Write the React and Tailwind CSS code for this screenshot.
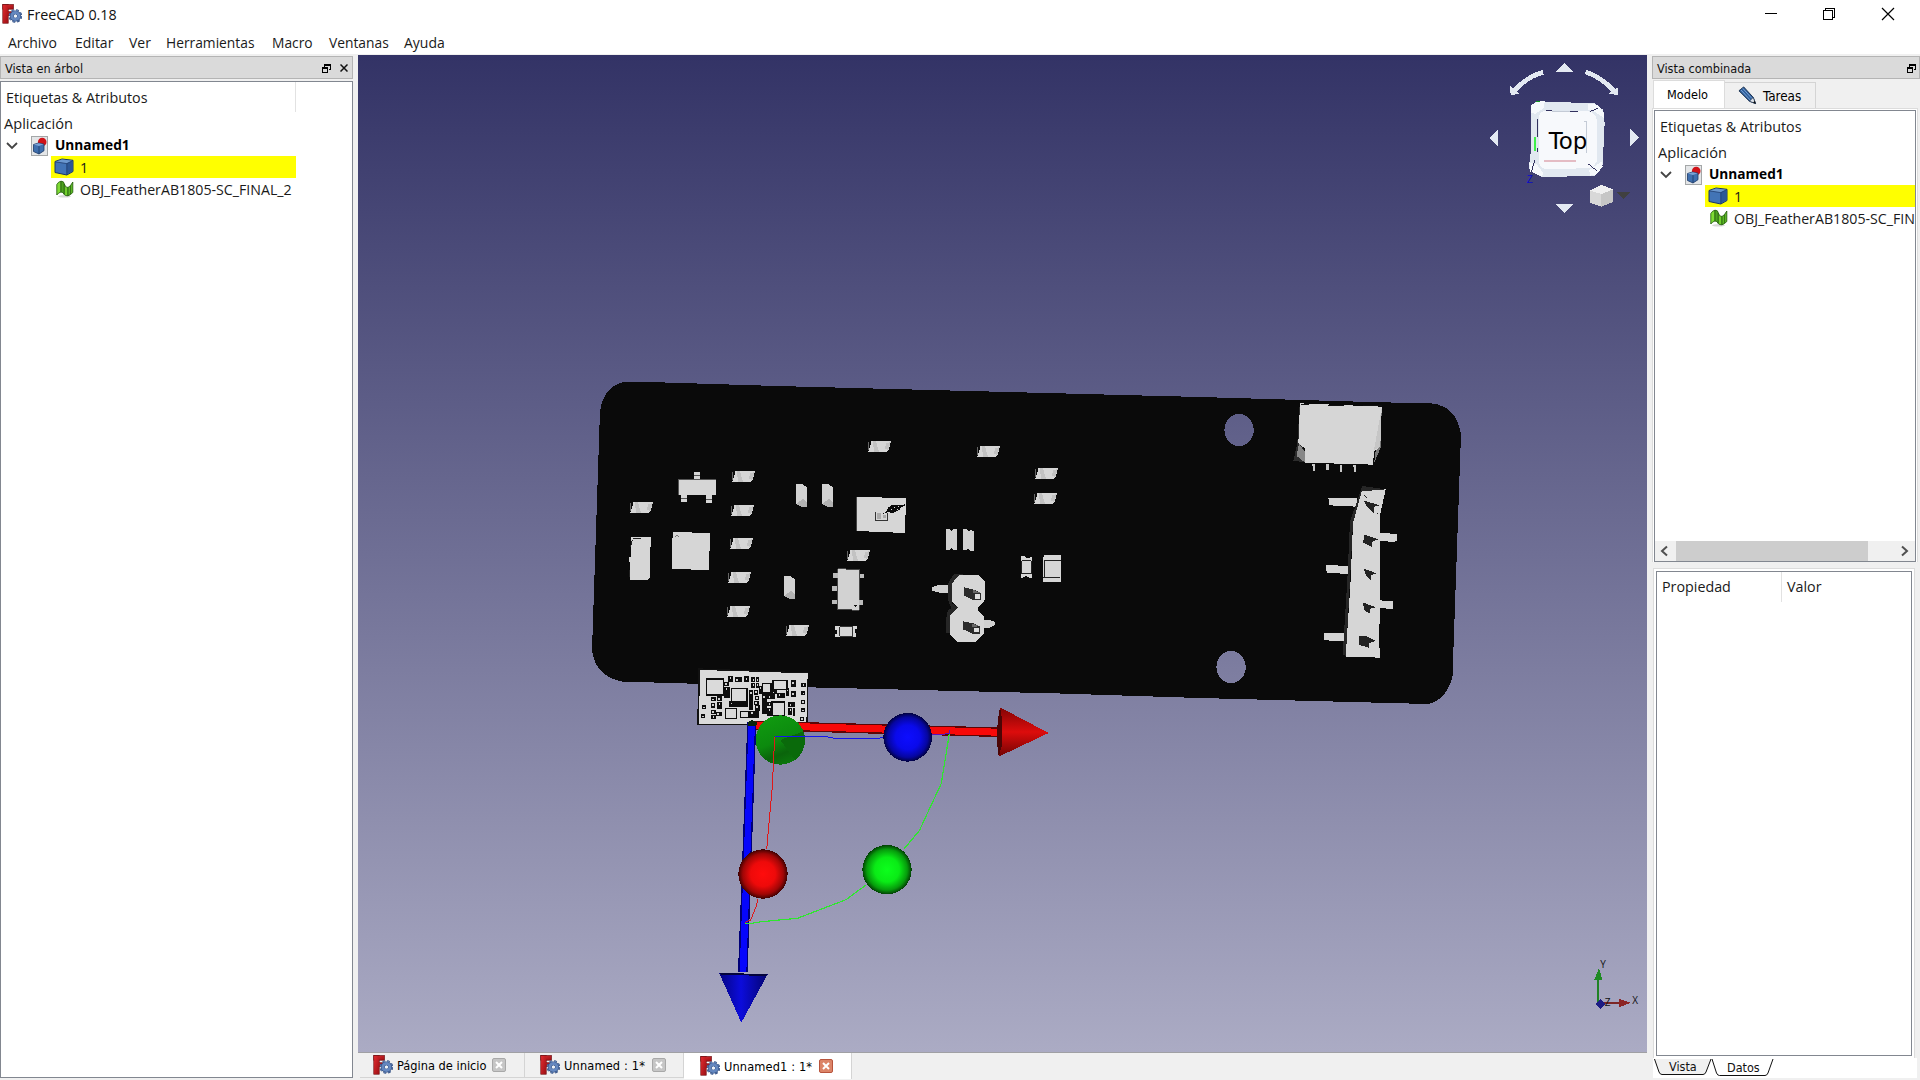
import React from "react";

const UI = "font-['Open_Sans','Noto_Sans',sans-serif]";
const TAHOMA = "font-['DejaVu_Sans_Condensed','DejaVu_Sans',sans-serif]";

function FreeCadLogo({ className }) {
  return (
    <svg viewBox="0 0 20 20" className={className}>
      <defs>
        <linearGradient id="logoRed" x1="0" y1="0" x2="1" y2="1">
          <stop offset="0" stopColor="#e02a2e" />
          <stop offset="1" stopColor="#9c1015" />
        </linearGradient>
      </defs>
      <rect x="0.8" y="0.6" width="5.4" height="18.6" fill="url(#logoRed)" stroke="#6e0d10" strokeWidth="0.7" />
      <rect x="0.8" y="0.6" width="10.6" height="4.6" fill="url(#logoRed)" stroke="#6e0d10" strokeWidth="0.7" />
      <rect x="5" y="7.6" width="4.4" height="4" fill="#b3171b" stroke="#6e0d10" strokeWidth="0.5" />
      <rect x="1.3" y="1.1" width="4.6" height="17.6" fill="url(#logoRed)" />
      <circle cx="13.4" cy="12" r="5.5" fill="none" stroke="#2c4677" strokeWidth="2.6" strokeDasharray="2.5 1.82" />
      <circle cx="13.4" cy="12" r="5.4" fill="none" stroke="#6688bd" strokeWidth="1.8" strokeDasharray="2.3 1.94" />
      <circle cx="13.4" cy="12" r="3.6" fill="none" stroke="#2c4677" strokeWidth="4" />
      <circle cx="13.4" cy="12" r="3.6" fill="none" stroke="#6487bf" strokeWidth="3" />
      <circle cx="13.4" cy="12" r="1.6" fill="#eef2f8" />
    </svg>
  );
}

function DocIcon() {
  return (
    <svg viewBox="0 0 17 20" className="h-5 w-[17px] shrink-0">
      <rect x="0.5" y="0.5" width="16" height="19" fill="#e4e6e8" stroke="#a4a7a8" />
      <circle cx="11.200" cy="6" r="4.300" fill="#d01218" />
      <path d="M2.500 8.500l5-1.500 5.500 1.200v6.500L8 18 2.500 15.500z" fill="#3f6fae" stroke="#1b3765" strokeWidth="0.800" />
      <path d="M2.800 8.600l5 1.500 5-1.800-5-1z" fill="#7ba2d4" />
      <path d="M8 10.200V18" stroke="#1b3765" strokeWidth="0.800" />
    </svg>
  );
}

function CubeIcon() {
  return (
    <svg viewBox="0 0 20 18" className="h-[18px] w-5 shrink-0">
      <path d="M1 3.500L8 1l11 1.300v11.200L12.800 17 1 14.500z" fill="#4274b6" stroke="#1b3765" strokeWidth="1" strokeLinejoin="round" />
      <path d="M1.600 3.800l11 1.600L18.400 2.800 8 1.600z" fill="#6a98d0" />
      <path d="M12.800 5.500L18.400 3v10.200L12.800 16.300z" fill="#2d5896" />
      <path d="M1.500 3.900l11.300 1.700V17M12.800 5.600L18.700 2.600" fill="none" stroke="#1b3765" strokeWidth="0.700" />
    </svg>
  );
}

/* Folded green sheet: two light faces and two darker ones */
function MeshIcon() {
  return (
    <svg viewBox="0 0 18 18" className="-mt-[3px] h-[18px] w-[18px] shrink-0">
      <ellipse cx="8.500" cy="16.300" rx="6.500" ry="1.300" fill="#d8d8d8" />
      <path d="M.8 4.500Q2.500 1.500 5 1.200V12Q2.500 12.500.8 15z" fill="#7fdc35" stroke="#2b6612" strokeWidth="0.900" strokeLinejoin="round" />
      <path d="M5 1.200Q8 1 8.300 4V14.500Q7 12 5 12z" fill="#4ea21f" stroke="#2b6612" strokeWidth="0.900" strokeLinejoin="round" />
      <path d="M8.300 4Q9.500 8 12 7.500V15.800Q9.500 16 8.300 14.500z" fill="#72d02d" stroke="#2b6612" strokeWidth="0.900" strokeLinejoin="round" />
      <path d="M12 7.500Q14.500 6.500 16.800 2V12.500Q14.500 15 12 15.800z" fill="#5cb824" stroke="#2b6612" strokeWidth="0.900" strokeLinejoin="round" />
      <path d="M14.500 5.500v9" stroke="#2b6612" strokeWidth="0.800" />
    </svg>
  );
}

function PencilIcon() {
  return (
    <svg viewBox="0 0 20 20" className="h-[19px] w-[19px] shrink-0">
      <path d="M1 5L6 1l10 11 2.500 6.500L12 16z" fill="#2f5f9e" stroke="#152b4a" strokeWidth="1" strokeLinejoin="round" />
      <path d="M3 4l10 11M5 2.500l10 11" stroke="#86abd8" strokeWidth="0.900" />
      <path d="M12 16l4-4 2.500 6.500z" fill="#dfe3e8" stroke="#152b4a" strokeWidth="0.700" />
      <path d="M15.800 17.500l1.800-2 1 3z" fill="#111" />
    </svg>
  );
}

function FloatIcon() {
  return (
    <svg viewBox="0 0 9 9" className="h-[9px] w-[9px] shrink-0" shapeRendering="crispEdges" fill="none" stroke="#000">
      <path d="M2.500 3V.5h6v5H6.500M2.500 1.500h6M.5 3.500h5v5h-5zM.5 4.500h5" />
    </svg>
  );
}

function DockHeader({ title, closable, className }) {
  return (
    <div className={`flex h-[23px] items-center border border-[#b4b4b4] bg-[#dadada] pt-px pl-1 text-[12.6px] text-[#111] ${TAHOMA} ${className}`}>
      <span className="flex-1 pt-[2px]">{title}</span>
      <FloatIcon />
      {closable && (
        <svg viewBox="0 0 8 8" className="ml-[9px] h-2 w-2" stroke="#111" strokeWidth="1.500">
          <path d="M.5.5l7 7M7.500.5l-7 7" />
        </svg>
      )}
    </div>
  );
}

function Tree({ className, headerRule, rowWidth, meshLabel }) {
  return (
    <div className={`overflow-hidden whitespace-nowrap text-[14.2px] text-[#1a1a1a] ${className}`}>
      <div className="flex h-[30px] items-center">
        <div className={`flex h-full items-center pt-[2px] pl-[5px] text-[14.3px] ${headerRule}`}>Etiquetas &amp; Atributos</div>
      </div>
      <div className="flex h-[23px] items-center pl-[3px] text-[14.6px]">Aplicación</div>
      <div className="flex h-[21px] items-center pl-[5px]">
        <svg viewBox="0 0 12 8" className="mr-[13px] h-2 w-3" fill="none" stroke="#444" strokeWidth="1.800">
          <path d="M1 1l5 5 5-5" />
        </svg>
        <DocIcon />
        <span className="ml-[7px] text-[13.7px] font-bold text-black">Unnamed1</span>
      </div>
      <div className={`ml-[50px] flex h-[22px] items-center bg-[#ffff00] pl-[3px] ${rowWidth}`}>
        <CubeIcon />
        <span className="ml-[6px] pt-px">1</span>
      </div>
      <div className="ml-[50px] flex h-[24px] items-center pl-[5px]">
        <MeshIcon />
        <span className="ml-[6px]">{meshLabel}</span>
      </div>
    </div>
  );
}

/* Small surface-mount parts, top-left corners in screen units */
const flatParts = [
  [868, 441], [977, 446], [1035, 468], [1034, 493], [732, 471], [731, 505], [730, 538],
  [728, 572], [727, 606], [630, 502], [847, 550], [786, 625],
];
const uprightParts = [[796, 484], [822, 484], [784, 576]];

/* Module footprint rectangles: x, y, width, height */
const openPads = [
  [50, 42, 50, 48], [125, 71, 46, 40], [218, 56, 25, 28], [249, 46, 42, 27], [246, 111, 38, 40],
  [107, 130, 32, 30], [151, 140, 26, 17],
];
const darkPads = [
  [115, 32, 13, 18], [135, 37, 20, 14], [163, 34, 13, 18], [184, 37, 10, 14], [197, 37, 10, 14], [184, 54, 11, 14],
  [197, 54, 11, 14], [102, 50, 15, 12], [103, 66, 16, 32], [62, 97, 15, 11], [80, 94, 15, 13], [63, 113, 13, 15],
  [63, 135, 15, 11], [64, 150, 13, 11], [82, 110, 14, 22], [78, 141, 18, 12], [35, 121, 12, 11], [33, 148, 12, 11],
  [118, 108, 56, 18], [176, 76, 14, 60], [192, 75, 13, 14], [206, 62, 11, 24], [194, 92, 14, 14], [195, 120, 14, 18],
  [180, 138, 28, 20], [192, 108, 14, 11], [216, 88, 14, 60], [232, 88, 24, 14], [262, 84, 22, 14], [244, 76, 16, 10],
  [288, 68, 8, 24], [303, 46, 14, 19], [303, 79, 14, 17], [334, 54, 14, 11], [334, 79, 12, 12], [333, 105, 12, 12],
  [333, 130, 12, 12], [330, 155, 12, 12], [295, 112, 20, 14], [295, 128, 10, 22], [308, 130, 8, 22], [232, 110, 12, 12],
  [232, 128, 10, 26],
];

function PinArrow({ d }) {
  return <path d={d} fill="#222" />;
}

function Scene() {
  return (
    <svg viewBox="358 55 1289 997" className="block h-[997px] w-[1289px]">
      <defs>
        <linearGradient id="sky" gradientUnits="userSpaceOnUse" x1="0" y1="55" x2="0" y2="1052">
          <stop offset="0" stopColor="#333366" />
          <stop offset="1" stopColor="#ababc4" />
        </linearGradient>
        <radialGradient id="ballBlue" cx="0.5" cy="0.5" r="0.5">
          <stop offset="0" stopColor="#0d0dff" /><stop offset="0.5" stopColor="#0a0aeb" /><stop offset="0.82" stopColor="#0606a0" /><stop offset="1" stopColor="#020240" />
        </radialGradient>
        <radialGradient id="ballRed" cx="0.5" cy="0.5" r="0.5">
          <stop offset="0" stopColor="#ff0c0c" /><stop offset="0.5" stopColor="#ee0a0a" /><stop offset="0.82" stopColor="#a00606" /><stop offset="1" stopColor="#400202" />
        </radialGradient>
        <radialGradient id="ballGreen" cx="0.5" cy="0.5" r="0.5">
          <stop offset="0" stopColor="#0cff1c" /><stop offset="0.5" stopColor="#0aeb16" /><stop offset="0.82" stopColor="#069c0c" /><stop offset="1" stopColor="#024004" />
        </radialGradient>
        <linearGradient id="coneRed" x1="0" y1="0" x2="0" y2="1">
          <stop offset="0" stopColor="#800505" /><stop offset="0.5" stopColor="#dd0c0c" /><stop offset="1" stopColor="#700404" />
        </linearGradient>
        <linearGradient id="coneBlue" x1="0" y1="0" x2="1" y2="0">
          <stop offset="0" stopColor="#040480" /><stop offset="0.45" stopColor="#0c0cdc" /><stop offset="1" stopColor="#040470" />
        </linearGradient>
        <linearGradient id="coneGreen" x1="0.3" y1="0" x2="0.7" y2="1">
          <stop offset="0" stopColor="#109a10" /><stop offset="0.5" stopColor="#0c8a0e" /><stop offset="0.75" stopColor="#0a640b" /><stop offset="1" stopColor="#0c7a0d" />
        </linearGradient>
      </defs>
      <rect x="358" y="55" width="1289" height="997" fill="url(#sky)" />

      <g shapeRendering="crispEdges">
        <path
          fillRule="evenodd"
          fill="#0a0a0a"
          d="M624 382L665 382.500 777 386 1200 397 1370 402 1432 403.500Q1456 406 1461 434L1452.500 676Q1447 700 1428 704L1200 698 1060 693.500 816 687.500 622 681.500Q595 676 592 650L600 411Q604 386 624 382ZM1224.500 431a14.600 16 0 1 0 29.200-2a14.600 16 0 1 0-29.200 2ZM1216.500 668a14.600 16 0 1 0 29.200-2a14.600 16 0 1 0-29.200 2Z"
        />

        {flatParts.map(([x, y]) => (
          <g key={`${x}-${y}`} transform={`translate(${x} ${y})`}>
            <path d="M3 0H23L21 8L19 11H0L3 3Z" fill="#d6d6d6" />
            <path d="M5 0L8 0 11 11H6ZM18 2L23 1 20 9 17 8Z" fill="#c2c2c2" />
            <path d="M0 1h1v8H0z" fill="#666" />
          </g>
        ))}
        {uprightParts.map(([x, y]) => (
          <g key={`${x}-${y}`} transform={`translate(${x} ${y})`}>
            <path d="M0 0H6L11 3V23H6L0 20Z" fill="#d2d2d2" />
            <path d="M0 20L7 15 11 18V23H6Z" fill="#b2b2b2" />
          </g>
        ))}

        <g transform="translate(580 370) scale(0.33333)">
          <path d="M297 328H408V376H396V398H378V376H321V395H303V376H297ZM342 307h18v20h-18z" fill="#d6d6d6" />
          <path d="M297 328V376M297 328H408M342 317h18M303 386h18M378 388h18" stroke="#555" strokeWidth="3" fill="none" />
          <path d="M153 501H212V530H209V622L205 629H150V575H147V560H152Z" fill="#d6d6d6" />
          <path d="M158 505h25M152 530l5-20M150 600v22" stroke="#222" strokeWidth="3" />
          <path d="M278 486L390 489 387 600 275 597Z" fill="#d6d6d6" />
          <path d="M285 499q6-6 12 0" stroke="#777" strokeWidth="3" fill="none" />
        </g>

        <g transform="translate(830 420) scale(0.33333)">
          <path d="M82 230L228 235 225 339 80 333Z" fill="#d6d6d6" />
          <path d="M80 232V333" stroke="#444" strokeWidth="3" />
          <path d="M136 275V301H173V280" fill="none" stroke="#333" strokeWidth="3" />
          <path d="M141 280h12v17h-12zM158 285h10v10h-10z" fill="#aaa" />
          <path d="M157 283L170 273 174 262 187 255 215 256 224 253V257L213 262 208 270 190 278 172 277Z" fill="#0a0a0a" />
          <path d="M192 262h3M200 268h3M205 260h3M182 270h3" stroke="#ddd" strokeWidth="3" />

          <path d="M24 446L90 449 87 571 21 568Z" fill="#d2d2d2" stroke="#444" strokeWidth="3" />
          <path d="M9 459h14v14H9zM7 498h14v16H7zM6 540h14v13H6zM90 462h12v13H90zM86 541h13v15H86z" fill="#bbb" />
          <path d="M72 556h9l-4 5z" fill="#111" />
          <path d="M15 618H81V628H76V640H78V651H15V642H20V630H15Z" fill="#d6d6d6" />
          <path d="M29 621H68V649H29Z" fill="#d6d6d6" stroke="#333" strokeWidth="3" />

          <path d="M348 327H358L364 333 372 327H381V389H370L364 384 357 390H348ZM399 327H411L416 333 422 331 432 332V392H422L415 386 408 390H399Z" fill="#d0d0d0" />
          <path d="M573 408H584L588 413H600L605 410V474H598L588 468 578 473H573Z" fill="#d6d6d6" />
          <path d="M575 422H604V461H575Z" fill="#d6d6d6" stroke="#222" strokeWidth="3" />
          <path d="M642 405H692V486H639V420Z" fill="#d6d6d6" />
          <path d="M641 422H692M640 473H691M644 424V472" stroke="#222" strokeWidth="3" />

          <path d="M354 495H325L307 501V512L328 518H354ZM460 600H480L494 605V616L478 623H460Z" fill="#d0d0d0" />
          <path d="M371 463H398L366 500V550L384 562 361 590V640L349 640V595L353 572 364 565 354 540V490Z" fill="#262626" />
          <path d="M388 465H447L465 484V540L444 562V572L462 590V640L436 666H382L360 642V588L384 562 366 545V490Z" fill="#d6d6d6" />
          <path d="M402 502L434 510 453 520V540H430L402 527ZM399 604L430 610 450 620V641H428L399 628Z" fill="#2b2b2b" />
          <path d="M430 510L453 519 428 520ZM426 610L449 618 426 622Z" fill="#666" />
          <path d="M435 522h15v15h-15zM432 624h14v12h-14z" fill="#dedede" />
        </g>

        <g transform="translate(1200 380) scale(0.33333)">
          <path d="M299 74L314 247 280 242 292 190Z" fill="#2c2c2c" />
          <path d="M297 190L314 215V247L290 228Z" fill="#888" />
          <path d="M545 82L543 200 522 250Z" fill="#777" />
          <path d="M300 70L545 80 540 200 522 215 519 254 315 248V206L295 190Z" fill="#d6d6d6" />
          <path d="M545 85L541 200 522 210Z" fill="#c6c6c6" />
          <path d="M302 73h25M384 76h48M490 78h55" stroke="#111" strokeWidth="3" />
          <path d="M337 252h8v20h-6zM378 253h9v18h-8zM420 254h6v22h-6zM460 255h8v20h-6z" fill="#c8c8c8" />

          <path d="M385 353L470 355V380L388 376ZM378 556L445 557V582L380 578ZM371 759L435 760V783L372 781Z" fill="#d4d4d4" />
          <path d="M538 458L590 462V482L580 486 538 482ZM535 661L580 663V686L535 685Z" fill="#d4d4d4" />
          <path d="M487 318L557 328 485 334 459 430 438 828 428 824 442 600 450 425Z" fill="#262626" />
          <path d="M485 334L557 328 540 405V700L537 770 540 833 437 830 452 600 459 430Z" fill="#d6d6d6" />
          <PinArrow d="M492 362L540 376 522 380V400L500 378Z" />
          <PinArrow d="M493 464L534 478 518 485 515 500 489 488Z" />
          <PinArrow d="M491 566L530 580 514 585 512 600 498 588Z" />
          <PinArrow d="M489 667L527 682 512 686 508 702 492 688Z" />
          <PinArrow d="M477 768L495 767 528 783 508 789 507 803 477 795Z" />
          <path d="M492 345l8 8M530 400h5" stroke="#222" strokeWidth="3" />
        </g>

        <g transform="translate(690 665) scale(0.33333)">
          <path d="M24 10L354 22V180L22 180Z" fill="#111" />
          <path d="M31 15L353 25 349 178 26 176Z" fill="#dadada" />
          {darkPads.map(([x, y, w, h]) => (
            <g key={`${x}-${y}`}>
              <rect x={x} y={y} width={w} height={h} fill="#0c0c0c" />
              <rect x={x + 4} y={y + 4} width={Math.min(5, w - 7)} height={Math.min(6, h - 7)} fill="#d0d0d0" />
            </g>
          ))}
          {openPads.map(([x, y, w, h]) => (
            <rect key={`${x}-${y}`} x={x} y={y} width={w} height={h} fill="#dadada" stroke="#0c0c0c" strokeWidth="4" />
          ))}
        </g>
      </g>

      <g transform="translate(680 660) scale(0.33333)" shapeRendering="crispEdges">
        <path d="M215 182L950 202V231L215 211Z" fill="#5c0606" />
        <path d="M225 186L950 206V227L225 207Z" fill="#f80808" />
        <path d="M960 142L1106 219 956 290Z" fill="url(#coneRed)" />
        <path d="M960 142Q944 215 956 290L965 260V170Z" fill="#4c0505" />
        <path d="M202 185H229L203 937H174Z" fill="#000078" />
        <path d="M206 185H225L199 937H179Z" fill="#0606fc" />
        <path d="M205 186L217 180 232 188 228 198H203Z" fill="#0a250a" />
        <path d="M117 938L263 943 184 1088Z" fill="url(#coneBlue)" />
        <path d="M117 938L263 943 255 948 125 944Z" fill="#04043c" />
        <circle cx="301" cy="240" r="74" fill="url(#coneGreen)" />
        <path d="M301 240L370 214A74 74 0 0 1 345 300Z" fill="#0a6a0b" />
        <path d="M286 230H438L470 236H590L612 232" fill="none" stroke="#1414f0" strokeWidth="3" />
        <path d="M755 225L808 221V211" fill="none" stroke="#5a10c0" strokeWidth="3" />
        <path d="M284 230L277 380 260 568M233 716L230 735 212 780 196 787" fill="none" stroke="#e01818" strokeWidth="3" />
        <path d="M808 221L784 370 718 512 672 567M558 675L498 719 352 775 245 785 215 790H196" fill="none" stroke="#2fe62f" strokeWidth="3.600" />
        <circle cx="683" cy="232" r="73" fill="url(#ballBlue)" />
        <circle cx="249" cy="642" r="74" fill="url(#ballRed)" />
        <circle cx="621" cy="629" r="74" fill="url(#ballGreen)" />
      </g>

      <g transform="translate(1460 40) scale(0.33333)" shapeRendering="crispEdges">
        <path d="M313 69L340 97H287ZM313 519L288 492H340ZM89 294L114 269V319ZM537 294L510 267V321Z" fill="#e3e9f2" />
        <path d="M249 97Q205 108 165 150M377 96Q425 112 462 152" fill="none" stroke="#e3e9f2" strokeWidth="14" />
        <path d="M150 136L152 165 178 162ZM474 142L474 165 445 161Z" fill="#e3e9f2" />
        <path d="M230 184L405 190 430 210 434 250 428 375 405 408 245 411 208 388V370L212 340 214 200Z" fill="#e1e8f0" />
        <path d="M214 195L235 184H255L250 205 225 222 214 218ZM385 192L412 194 430 215 432 235 405 215 385 210ZM208 368L230 372 250 400 245 409 210 394ZM425 365L428 380 408 405 390 407 388 390Z" fill="#f6f9fc" />
        <path d="M255 212H380Q408 218 410 240V365Q400 385 380 385L255 387Q236 380 236 360V230Q240 216 255 212Z" fill="#f7f9fc" />
        <path d="M258 212h18M330 216h24M232 238V290M232 325V335M390 214L415 205M385 372L412 393M224 360L215 395" stroke="#32325f" strokeWidth="3" fill="none" />
        <path d="M276 214H330M372 245H380V340" stroke="#c4cbd6" strokeWidth="4" fill="none" />
        <path d="M226 290V333" stroke="#3ff04a" strokeWidth="5" />
        <path d="M229 184h10" stroke="#109a20" strokeWidth="4" />
        <path d="M252 362H348" stroke="#e4bcc4" strokeWidth="6" />
        <text x="266" y="328" fontSize="69" textLength="116" lengthAdjust="spacingAndGlyphs" fontFamily="'DejaVu Sans', sans-serif" fill="#000">Top</text>
        <text x="200" y="428" fontSize="30" fontFamily="'Liberation Sans', sans-serif" fill="#0a0ac8">Z</text>
        <path d="M390 452L424 434 459 448V486L424 500 390 488Z" fill="#d8d8d8" />
        <path d="M390 452L424 434 459 448 424 462Z" fill="#f0f0f0" />
        <path d="M424 462L459 448V486L424 500Z" fill="#c6c6c6" />
        <path d="M471 457H512L492 477Z" fill="#404040" />
      </g>

      <g transform="translate(1560 940) scale(0.33333)" shapeRendering="crispEdges" fontFamily="'Open Sans', sans-serif" fill="#111" fontSize="30">
        <path d="M113 190V110" stroke="#1f8224" strokeWidth="6" />
        <path d="M117 84L127 119H103Z" fill="#1f8a24" />
        <path d="M125 189H180" stroke="#7c2626" strokeWidth="6" />
        <path d="M177 177L212 188 177 202Z" fill="#8c2424" />
        <path d="M121 177L136 191 121 207 107 191Z" fill="#1c1c84" />
        <text x="121" y="83">Y</text>
        <text x="134" y="198">Z</text>
        <text x="217" y="192">X</text>
      </g>
    </svg>
  );
}

function DocTab({ label, active, width, inset = "pl-[13px]", closeGap = "ml-[7px]", tracking = "" }) {
  return (
    <div className={`flex items-center border-r border-[#d4d4d4] ${inset} ${width} ${active ? "h-[26px] bg-white" : "h-[25px] border-b bg-[#f0f0f0]"}`}>
      <FreeCadLogo className="h-5 w-5 shrink-0" />
      <span className={`ml-1 pt-px whitespace-pre ${tracking}`}>{label}</span>
      <span className={`${closeGap} flex h-[14px] w-[14px] items-center justify-center rounded-[2px] border ${active ? "border-[#b8543c] bg-[#dc8468]" : "border-[#a8a8a8] bg-[#c6c6c6]"}`}>
        <svg viewBox="0 0 8 8" className="h-2 w-2" stroke="#fff" strokeWidth="2"><path d="M1 1l6 6M7 1L1 7" /></svg>
      </span>
    </div>
  );
}

export default function App() {
  return (
    <div className={`flex h-[1080px] w-[1920px] flex-col overflow-hidden bg-[#f0f0f0] text-black ${UI}`}>
      <header className="h-[54px] shrink-0 bg-white">
        <div className="flex h-[28px] items-center pl-[2px]">
          <FreeCadLogo className="h-5 w-5" />
          <span className="ml-[5px] flex-1 pt-px text-[14.3px] text-[#111]">FreeCAD 0.18</span>
          <svg viewBox="0 0 130 14" className="mr-[25px] h-[14px] w-[130px]" fill="none" stroke="#000" shapeRendering="crispEdges">
            <path d="M0 6.500h12M58.500 3.500h9v9h-9zM60.500 3V1.500h9v9H68" />
            <path d="M117 1l12 12M129 1l-12 12" shapeRendering="auto" strokeWidth="1.200" />
          </svg>
        </div>
        <nav className="flex h-[28px] items-center pt-[2px] pl-2 text-[14px] leading-none text-[#1a1a1a]">
          <span className="w-[67px]">Archivo</span>
          <span className="w-[54px]">Editar</span>
          <span className="w-[37px]">Ver</span>
          <span className="w-[106px] text-[13.8px]">Herramientas</span>
          <span className="w-[57px] text-[13.8px]">Macro</span>
          <span className="w-[75px] text-[13.8px]">Ventanas</span>
          <span>Ayuda</span>
        </nav>
      </header>

      <main className="flex min-h-0 flex-1">
        <aside className="flex w-[353px] shrink-0 flex-col pt-[2px]">
          <DockHeader title="Vista en árbol" closable className="shrink-0 pr-1" />
          <Tree
            className="mt-[2px] mb-[2px] flex-1 border border-[#828790] bg-white"
            headerRule="w-[295px] border-r border-[#e2e2e2]"
            rowWidth="w-[245px]"
            meshLabel="OBJ_FeatherAB1805-SC_FINAL_2"
          />
        </aside>

        <section className="ml-[5px] flex w-[1289px] shrink-0 flex-col pt-px">
          <Scene />
          <div className={`flex h-[27px] items-start border-t border-[#a0a0a4] pl-[2px] text-[12.7px] ${TAHOMA}`}>
            <DocTab label="Página de inicio" width="w-[165px]" closeGap="ml-[5px]" />
            <DocTab label="Unnamed : 1*" width="w-[159px]" inset="pl-[15px]" tracking="tracking-[0.15px]" closeGap="ml-[7px]" />
            <DocTab label="Unnamed1 : 1*" width="w-[168px]" inset="pl-[16px]" tracking="tracking-[0.12px]" closeGap="ml-[7px]" active />
          </div>
        </section>

        <aside className="ml-[5px] flex min-w-0 flex-1 flex-col pt-[2px]">
          <DockHeader title="Vista combinada" className="shrink-0 pr-[3px]" />
          <div className={`flex h-[29px] shrink-0 items-end pl-px text-[12.6px] ${TAHOMA}`}>
            <div className="flex h-[28px] w-[72px] items-center justify-center border border-b-0 border-[#dcdcdc] bg-white pt-[2px] pr-[3px]">Modelo</div>
            <div className="flex h-[26px] w-[91px] items-center border-t border-r border-[#d4d4d4] pl-[13px]">
              <PencilIcon />
              <span className="ml-[6px] pt-[3px] text-[13.4px]">Tareas</span>
            </div>
          </div>

          <div className="mr-[2px] flex h-[454px] shrink-0 flex-col border border-b-0 border-[#dcdcdc] bg-white pt-px pr-[1px] pl-px">
            <div className="flex min-w-0 flex-1 flex-col border border-[#828790]">
              <Tree className="flex-1" headerRule="w-full" rowWidth="w-[210px]" meshLabel="OBJ_FeatherAB1805-SC_FIN" />
              <div className="flex h-5 items-center bg-[#f0f0f0]">
                <svg viewBox="0 0 21 20" className="h-5 w-[21px]" fill="none" stroke="#505050" strokeWidth="2"><path d="M12 5.500L7 10l5 4.500" /></svg>
                <div className="h-full w-[192px] bg-[#cdcdcd]" />
                <svg viewBox="0 0 20 20" className="ml-auto h-5 w-5" fill="none" stroke="#505050" strokeWidth="2"><path d="M7 5.500L12 10l-5 4.500" /></svg>
              </div>
            </div>
          </div>

          <div className="mt-[6px] mr-[5px] ml-px flex h-[491px] shrink-0 flex-col border border-[#dcdcdc] bg-white p-[2px]">
            <div className="flex-1 border border-[#828790] bg-white">
              <div className="flex h-[30px] items-center text-[14.3px] text-[#1a1a1a]">
                <span className="flex h-full w-[125px] items-center border-r border-[#e2e2e2] pl-[5px]">Propiedad</span>
                <span className="pl-[5px]">Valor</span>
              </div>
            </div>
          </div>
          <div className={`-mt-px mr-[3px] ml-px flex h-5 bg-white text-[12.5px] ${TAHOMA}`}>
            <svg viewBox="0 0 122 20" className="h-5 w-[122px]" fill="none" stroke="#111">
              <path d="M1.500 1L6 14Q7 16.500 9 16.500H50Q52 16.500 53 14L58 1" fill="#f0f0f0" />
              <path d="M59 1L63.500 15Q64.500 17.500 66.500 17.500H112Q114 17.500 115 15L120 1" fill="#fff" />
              <text x="16" y="12.500" fill="#111" stroke="none">Vista</text>
              <text x="74" y="13.500" fill="#111" stroke="none">Datos</text>
            </svg>
          </div>
        </aside>
      </main>
    </div>
  );
}
